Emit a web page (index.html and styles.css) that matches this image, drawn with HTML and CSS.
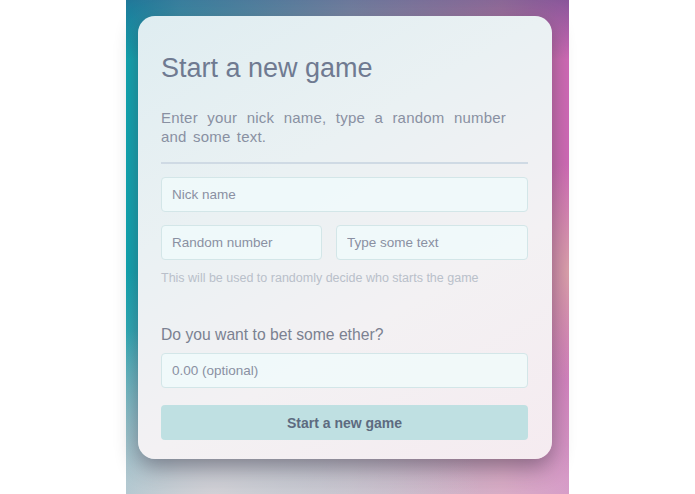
FILE: index.html
```html
<!DOCTYPE html>
<html lang="en">
<head>
<meta charset="utf-8">
<title>Start a new game</title>
<link rel="stylesheet" href="styles.css">
</head>
<body>
<div class="stage">
  <div class="card">
    <h1 class="title">Start a new game</h1>
    <p class="intro">Enter your nick name, type a random number and some text.</p>
    <hr class="divider">
    <input class="field" type="text" placeholder="Nick name">
    <div class="row">
      <input class="field field-num" type="text" placeholder="Random number">
      <input class="field field-text" type="text" placeholder="Type some text">
    </div>
    <p class="help">This will be used to randomly decide who starts the game</p>
    <p class="label">Do you want to bet some ether?</p>
    <input class="field" type="text" placeholder="0.00 (optional)">
    <button class="submit" type="button">Start a new game</button>
  </div>
</div>
</body>
</html>
```
FILE: styles.css
```css
html, body {
  margin: 0;
  padding: 0;
  background: #ffffff;
}
body {
  font-family: "Liberation Sans", Arial, sans-serif;
  height: 494px;
  overflow: hidden;
}
.stage {
  width: 443px;
  height: 494px;
  margin: 0 auto;
  padding: 16px 0 0 12px;
  box-sizing: border-box;
  background:
    linear-gradient(180deg, rgba(50, 60, 120, 0.45) 0%, rgba(50, 60, 120, 0) 12%),
    radial-gradient(ellipse 12% 22% at 100% 55%, rgba(222, 172, 170, 0.85) 0%, rgba(222, 172, 170, 0) 100%),
    radial-gradient(ellipse 60% 35% at 20% 100%, rgba(215, 210, 215, 0.9) 0%, rgba(215, 210, 215, 0) 100%),
    linear-gradient(180deg, rgba(255, 255, 255, 0) 55%, rgba(220, 200, 215, 0.55) 100%),
    linear-gradient(90deg, #0fa8b3 0%, #3fb3bb 12%, #9aaab8 50%, #d28ab0 85%, #d06ab6 100%);
}
.card {
  width: 414px;
  height: 443px;
  box-sizing: border-box;
  padding: 36px 24px 19px 23px;
  border-radius: 17px;
  background: linear-gradient(150deg, #dfedf1 0%, #eaf1f3 35%, #f3f1f3 65%, #f5ebf0 100%);
  box-shadow: 0 8px 22px rgba(40, 30, 50, 0.45);
}
.title {
  margin: 0;
  font-size: 27px;
  line-height: 32px;
  font-weight: normal;
  color: #6f7a91;
}
.intro {
  margin: 24px 0 0 0;
  max-width: 345px;
  font-size: 15px;
  line-height: 19px;
  letter-spacing: 0.2px;
  word-spacing: 2px;
  text-align: justify;
  color: #8990a2;
}
.divider {
  margin: 16px 0 0 0;
  border: 0;
  height: 2px;
  background: #cfdae4;
}
.field {
  display: block;
  width: 100%;
  height: 35px;
  box-sizing: border-box;
  margin: 13px 0 0 0;
  padding: 0 10px;
  font-family: "Liberation Sans", Arial, sans-serif;
  font-size: 13.5px;
  color: #6f7a91;
  background: rgba(240, 250, 250, 0.85);
  border: 1px solid #d3e6e8;
  border-radius: 4px;
  outline: none;
}
.field::placeholder {
  color: #8a90a2;
}
.row {
  display: flex;
  gap: 14px;
  margin-top: 13px;
}
.row .field {
  margin: 0;
}
.field-num {
  flex: 0 0 161px;
  width: 161px;
}
.field-text {
  flex: 1 1 auto;
  width: auto;
  min-width: 0;
}
.help {
  margin: 10px 0 0 0;
  font-size: 12.5px;
  line-height: 16px;
  color: #b9c0ca;
}
.label {
  margin: 39px 0 0 0;
  font-size: 15.7px;
  line-height: 20px;
  color: #7b8191;
}
.label + .field {
  margin-top: 8px;
}
.submit {
  display: block;
  width: 100%;
  height: 35px;
  margin-top: 17px;
  border: 0;
  border-radius: 4px;
  background: #bfe0e2;
  font-family: "Liberation Sans", Arial, sans-serif;
  font-weight: bold;
  font-size: 14px;
  color: #5d6b80;
  cursor: pointer;
}
```
